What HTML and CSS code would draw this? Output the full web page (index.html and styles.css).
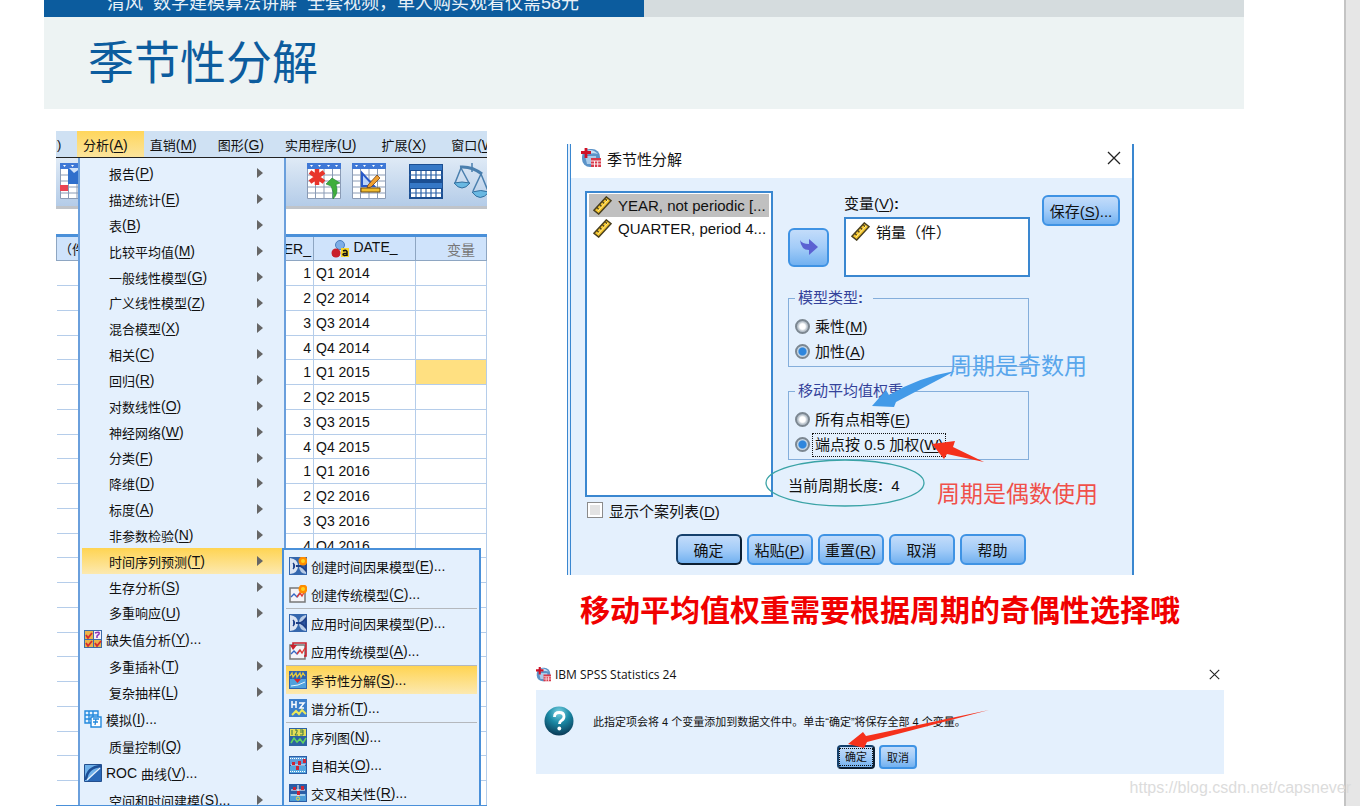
FILE: index.html
```html
<!DOCTYPE html>
<html lang="zh-CN">
<head>
<meta charset="utf-8">
<title>季节性分解</title>
<link rel="stylesheet" href="styles.css">
</head>
<body>
<svg class="defs" aria-hidden="true">
  <symbol id="ruler" viewBox="0 0 20 20">
    <path d="M1 15 14 1l5 4L6 19z" fill="#f5c52c" stroke="#4a4020" stroke-width="1.6"/>
    <path d="m4 12 2 2m1-5 2 2m1-5 2 2m1-5 2 2" stroke="#4a4020" stroke-width="1.3"/>
    <path d="m5 16 11-12" stroke="#fff0a0" stroke-width="1"/>
  </symbol>
  <symbol id="logo" viewBox="0 0 20 20">
    <rect x="1" y="1" width="18" height="18" rx="8" fill="#5b93c8"/>
    <path d="M4 4q6-5 13 2-5-2-13 1z" fill="#c6dff4"/>
    <path d="M4 8h11v8H6z" fill="#a9cbea"/>
    <path d="M5 0v10M0 4.500h10" stroke="#cf1126" stroke-width="2.800"/>
    <path d="M10 10h10v9H10z" fill="#d8394a"/>
    <path d="M10 13h10m-10 3h10m-6.500-3v6m3.200-6v6" stroke="#fff" stroke-width=".9"/>
  </symbol>
  <symbol id="grid" viewBox="0 0 34 36">
    <path d="M.5.500h33v35H.5z" fill="#fff" stroke="#8a9bb5"/>
    <path d="M0 0h34v6H0z" fill="#3f78d6"/>
    <path d="M3 2h3l-1.500 2zm8 0h3l-1.500 2zm9 0h3l-1.500 2zm8 0h3l-1.500 2z" fill="#fff"/>
    <path d="M0 12h34M0 18h34M0 24h34M0 30h34M8.500 6v30M17 6v30M25.500 6v30" stroke="#8a9bb5"/>
  </symbol>
  <symbol id="causal" viewBox="0 0 18 18">
    <path d="M0 0h18v18H0z" fill="#3567ad"/>
    <path d="M1 1q8 1 8 8t-8 8z" fill="#dbe4f3"/>
    <path d="M17 1q-7 1-7 8t7 8z" fill="#b8cbe6"/>
    <path d="M17 4q-3 4-6 5 3 1 6 5zM4 6q3 3 0 6" stroke="#1f3f86" stroke-width="1.400" fill="#2c55a0"/>
    <path d="M7 9h5" stroke="#1f3f86" stroke-width="2"/>
  </symbol>
  <symbol id="chart" viewBox="0 0 18 18">
    <path d="M1 3h15v14H1z" fill="#f4f4f8" stroke="#777" stroke-width="1.500"/>
    <path d="m2 12 3-3 3 3 3-4" stroke="#3466c4" stroke-width="1.400" fill="none"/>
    <path d="m8 12 3-4 2 3 3-5" stroke="#e23b35" stroke-width="1.400" fill="none"/>
  </symbol>
  <symbol id="star" viewBox="0 0 10 10">
    <circle cx="5" cy="5" r="4.500" fill="#ff8c00"/><circle cx="5" cy="5" r="2" fill="#ffd21f"/>
  </symbol>
</svg>
<div class="page">
  <main class="slide">
    <header class="head">
      <div class="strip"><p class="promo">清风&nbsp; 数学建模算法讲解&nbsp; 全套视频，单人购买观看仅需58元</p></div>
      <h1 class="title">季节性分解</h1>
    </header>

    <div class="content">
      <section class="spss">
        <nav class="menubar">
          <button class="edge">)</button>
          <button class="open">分析<span>(<u>A</u>)</span></button>
          <button>直销<span>(<u>M</u>)</span></button>
          <button>图形<span>(<u>G</u>)</span></button>
          <button class="roomy">实用程序<span>(<u>U</u>)</span></button>
          <button class="roomy">扩展<span>(<u>X</u>)</span></button>
          <button>窗口<span>(<u>W</u>)</span></button>
        </nav>
        <div class="toolbar">
          <svg class="tool" viewBox="0 0 34 36"><use href="#grid"/><path d="M8 6h26v15H8z" fill="#2f6fcc"/><path d="m9 5 5 5 7-5z" fill="#cfe2fa"/><path d="M0 22h8v6H0z" fill="#ea4453"/></svg>
          <div class="tools">
            <svg class="tool" viewBox="0 0 34 36"><use href="#grid"/><path d="M10 6v16M3 9l14 10M17 9 3 19" stroke="#e8352c" stroke-width="4.500"/><path d="m19 21 6-6 8 5-4 1.500q3 9-3 14.500 1-8-2-13z" fill="#3fae3c" stroke="#1e8230" stroke-width=".6"/></svg>
            <svg class="tool" viewBox="0 0 34 36"><use href="#grid"/><path d="M10 10v13h12z" fill="#bcd4fa" stroke="#2859c8" stroke-width="2"/><path d="m16 22 9-10 3 3-9 9-4 1z" fill="#f0a030" stroke="#74421a" stroke-width=".8"/><path d="M9 25h19v4H9z" fill="#f2bd2c" stroke="#6f4b10"/></svg>
            <svg class="tool" viewBox="0 0 34 36"><path d="M0 1h34v35H0z" fill="#1c4f92"/><path d="M1 2h32v5H1zM1 20h32v5H1z" fill="#3678c6"/><path d="M2 8h30v8H2zM2 26h30v8H2z" fill="#fff"/><path d="M0 12h34M0 30h34M7 8v8m5-8v8m5-8v8m5-8v8m5-8v8M7 26v8m5-8v8m5-8v8m5-8v8m5-8v8" stroke="#2b62a8" stroke-width="1.200"/></svg>
            <svg class="tool" viewBox="0 0 34 36"><path d="M18 0v9M7 5 1 20M7 5l8 15M27 11l-8 17m8-17 7 17" fill="none" stroke="#4a7fae" stroke-width="1.500"/><path d="M6 4q12-1 22 7" fill="none" stroke="#4a7fae" stroke-width="3"/><path d="M0 20q8-2 16 0-8 10-16 0zM18 29q9-3 17 0-9 11-17 0z" fill="#69b8e2" stroke="#34709f"/></svg>
          </div>
        </div>
        <table class="data">
          <colgroup><col class="c1"><col class="c2"><col class="c3"><col></colgroup>
          <thead><tr><th class="left">（件</th><th class="right">QUARTER_</th><th><svg class="nominal" viewBox="0 0 18 18"><circle cx="9" cy="5" r="4.500" fill="#7eaee6" stroke="#4b7fbc"/><circle cx="5" cy="13" r="4.500" fill="#c9202b"/><path d="M10 8h8v9h-8z" fill="#f6d52c"/><path d="M12 11q3-1.500 4 .5v4.500m0-2.500q-4-.5-4 1t4 .5" fill="none" stroke="#111" stroke-width="1.500"/></svg>DATE_</th><th class="new">变量</th></tr></thead>
          <tbody>
            <tr><td></td><td>1</td><td>Q1 2014</td><td></td></tr>
            <tr><td></td><td>2</td><td>Q2 2014</td><td></td></tr>
            <tr><td></td><td>3</td><td>Q3 2014</td><td></td></tr>
            <tr><td></td><td>4</td><td>Q4 2014</td><td></td></tr>
            <tr><td></td><td>1</td><td>Q1 2015</td><td class="current"></td></tr>
            <tr><td></td><td>2</td><td>Q2 2015</td><td></td></tr>
            <tr><td></td><td>3</td><td>Q3 2015</td><td></td></tr>
            <tr><td></td><td>4</td><td>Q4 2015</td><td></td></tr>
            <tr><td></td><td>1</td><td>Q1 2016</td><td></td></tr>
            <tr><td></td><td>2</td><td>Q2 2016</td><td></td></tr>
            <tr><td></td><td>3</td><td>Q3 2016</td><td></td></tr>
            <tr><td></td><td>4</td><td>Q4 2016</td><td></td></tr>
            <tr><td></td><td></td><td></td><td></td></tr>
            <tr><td></td><td></td><td></td><td></td></tr>
            <tr><td></td><td></td><td></td><td></td></tr>
            <tr><td></td><td></td><td></td><td></td></tr>
            <tr><td></td><td></td><td></td><td></td></tr>
            <tr><td></td><td></td><td></td><td></td></tr>
            <tr><td></td><td></td><td></td><td></td></tr>
            <tr><td></td><td></td><td></td><td></td></tr>
            <tr><td></td><td></td><td></td><td></td></tr>
            <tr><td></td><td></td><td></td><td></td></tr>
          </tbody>
        </table>

        <div class="menu">
          <button class="sub">报告<span>(<u>P</u>)</span></button>
          <button class="sub">描述统计<span>(<u>E</u>)</span></button>
          <button class="sub">表<span>(<u>B</u>)</span></button>
          <button class="sub">比较平均值<span>(<u>M</u>)</span></button>
          <button class="sub">一般线性模型<span>(<u>G</u>)</span></button>
          <button class="sub">广义线性模型<span>(<u>Z</u>)</span></button>
          <button class="sub">混合模型<span>(<u>X</u>)</span></button>
          <button class="sub">相关<span>(<u>C</u>)</span></button>
          <button class="sub">回归<span>(<u>R</u>)</span></button>
          <button class="sub">对数线性<span>(<u>O</u>)</span></button>
          <button class="sub">神经网络<span>(<u>W</u>)</span></button>
          <button class="sub">分类<span>(<u>F</u>)</span></button>
          <button class="sub">降维<span>(<u>D</u>)</span></button>
          <button class="sub">标度<span>(<u>A</u>)</span></button>
          <button class="sub">非参数检验<span>(<u>N</u>)</span></button>
          <button class="sub active">时间序列预测<span>(<u>T</u>)</span></button>
          <button class="sub">生存分析<span>(<u>S</u>)</span></button>
          <button class="sub">多重响应<span>(<u>U</u>)</span></button>
          <button class="iconic"><svg viewBox="0 0 18 18"><path d="M0 0h18v18H0z" fill="#3b6ca8"/><path d="M1 1h8v8H1zM1 10h8v7H1zm9 0h7v7h-7z" fill="#e9b44a"/><path d="M10 1h7v8h-7z" fill="#f7f0f8"/><path d="m2 5 2 3 4-5M2 13l2 3 4-5m3 2 2 3 4-5" fill="none" stroke="#d82c2c" stroke-width="1.800"/><path d="M11 3q5-2 4 1l-2 2v2" fill="none" stroke="#8b35b8" stroke-width="1.500"/></svg>缺失值分析<span>(<u>Y</u>)...</span></button>
          <button class="sub">多重插补<span>(<u>T</u>)</span></button>
          <button class="sub">复杂抽样<span>(<u>L</u>)</span></button>
          <button class="iconic"><svg viewBox="0 0 18 18"><path d="M1 1h13v12H1zM1 5h13M1 9h13M5 1v12M9 1v12" fill="#e8f4ff" stroke="#2389dd" stroke-width="1.400"/><path d="M7 7h10v10H7z" fill="#fff" stroke="#2389dd" stroke-width="1.400"/><path d="M9 9h6m-6 3h5m-2-3-1 6" stroke="#2389dd" stroke-width="1.300"/></svg>模拟<span>(<u>I</u>)...</span></button>
          <button class="sub">质量控制<span>(<u>Q</u>)</span></button>
          <button class="iconic"><svg viewBox="0 0 18 18"><path d="M.5.500h17v17H.5z" fill="#6fb1ea" stroke="#234f8e"/><path d="M17 1v16H3z" fill="#2a69b8"/><path d="M2 16Q3 3 17 2" fill="none" stroke="#1d4f97" stroke-width="2.500"/><path d="M3 16 16 4" fill="none" stroke="#e6f2fd" stroke-width="1.400"/></svg><span>ROC </span>曲线<span>(<u>V</u>)...</span></button>
          <button class="sub">空间和时间建模<span>(<u>S</u>)...</span></button>
        </div>

        <div class="submenu">
          <button><svg viewBox="0 0 18 18"><use href="#causal"/><use href="#star" x="9" y="-1" width="10" height="10"/></svg>创建时间因果模型<span>(<u>E</u>)...</span></button>
          <button><svg viewBox="0 0 18 18"><use href="#chart"/><use href="#star" x="9" y="-1" width="10" height="10"/></svg>创建传统模型<span>(<u>C</u>)...</span></button>
          <hr>
          <button><svg viewBox="0 0 18 18"><use href="#causal"/></svg>应用时间因果模型<span>(<u>P</u>)...</span></button>
          <button><svg viewBox="0 0 18 18"><use href="#chart"/><path d="M4 5V1h13v13h-2" fill="none" stroke="#c91f2b" stroke-width="1.600"/><path d="M1 3h7L4 8z" fill="#c91f2b"/></svg>应用传统模型<span>(<u>A</u>)...</span></button>
          <hr>
          <button class="active"><svg viewBox="0 0 18 18"><path d="M0 0h18v18H0z" fill="#2d62b0"/><path d="M1 8h16v9H1z" fill="#4fa1dc"/><path d="m1 5 2-3 1 4 3-4 1 4 3-4 1 4 2-4 2 3" fill="none" stroke="#e4c93c" stroke-width="1.300"/><path d="M5 8h7l-3.500 4z" fill="#d9262d"/><path d="m2 15 7-1 7-3" fill="none" stroke="#e6f5ff"/></svg>季节性分解<span>(<u>S</u>)...</span></button>
          <button><svg viewBox="0 0 18 18"><path d="M0 0h18v18H0z" fill="#3c7fcb"/><path d="M3 2v7m4-7v7M3 5.500h4M10 4h5l-4 5h4" fill="none" stroke="#fff" stroke-width="1.500"/><path d="m3 16 4-4 3 3 3-4 4 4" fill="none" stroke="#ece95a" stroke-width="2"/></svg>谱分析<span>(<u>T</u>)...</span></button>
          <hr>
          <button><svg viewBox="0 0 18 18"><path d="M0 0h18v18H0z" fill="#2c62a2"/><path d="M1 1h16v7H1z" fill="#e6dd55"/><path d="M3 2v5m3-5h2v2L6 7h3m2-5h3v5h-3m0-3h3" fill="none" stroke="#39764b"/><path d="m2 15 3-5 3 4 3-3 3 4 3-5" fill="none" stroke="#62d65f" stroke-width="1.500"/></svg>序列图<span>(<u>N</u>)...</span></button>
          <button><svg viewBox="0 0 18 18"><path d="M0 0h18v18H0z" fill="#2a5da6"/><path d="M1 1h16v8H1z" fill="#5f9fdb"/><path d="M1 10h16v7H1z" fill="#55a7df"/><path d="M1 2.500h16M1 15.500h16" stroke="#fff" stroke-dasharray="1 1"/><path d="M2 9h14" stroke="#fff"/><path d="M3 6h3v3H3zm6-1h3v4H9zM7 10h3v4H7zm7-7h3v4h-3z" fill="#cd2536"/></svg>自相关<span>(<u>O</u>)...</span></button>
          <button><svg viewBox="0 0 18 18"><path d="M0 0h18v18H0z" fill="#2a5da6"/><path d="M1 10h16v7H1z" fill="#4b9cd8"/><path d="M2 6h14M2 11h14M9 1v11" stroke="#fff"/><path d="M4 3h3v3H4zm8-1h3v4h-3zM8 7h3v4H8z" fill="#cd2536"/><circle cx="9" cy="14.500" r="1.600" fill="none" stroke="#f3dd3c"/></svg>交叉相关性<span>(<u>R</u>)...</span></button>
        </div>
      </section>

      <div class="right">
        <section class="dialog">
          <div class="dialog-title"><svg class="logo"><use href="#logo"/></svg><h2>季节性分解</h2>
            <button class="close" aria-label="关闭"><svg viewBox="0 0 14 14"><path d="m1 1 12 12M13 1 1 13" stroke="#222" stroke-width="1.300"/></svg></button></div>
          <div class="dialog-body">
            <ul class="list">
              <li class="picked"><svg class="ruler"><use href="#ruler"/></svg>YEAR, not periodic [...</li>
              <li><svg class="ruler"><use href="#ruler"/></svg>QUARTER, period 4...</li>
            </ul>
            <div class="middle">
              <p class="var-label" id="var-label">变量(<u>V</u>)<b>:</b></p>
              <div class="picker">
                <button class="move" aria-label="移动变量"><svg viewBox="0 0 18 16"><path d="M0 1q2 4 9 4V0l9 8-9 8v-5Q1 11 0 1z" fill="#5b61d2"/></svg></button>
                <ul class="vars" aria-labelledby="var-label"><li><svg class="ruler"><use href="#ruler"/></svg>销量（件）</li></ul>
              </div>
              <fieldset>
                <legend>模型类型<b>:</b></legend>
                <label><input type="radio" name="model"><span>乘性(<u>M</u>)</span></label>
                <label><input type="radio" name="model" checked><span>加性(<u>A</u>)</span></label>
              </fieldset>
              <fieldset>
                <legend>移动平均值权重</legend>
                <label><input type="radio" name="weight"><span>所有点相等(<u>E</u>)</span></label>
                <label><input type="radio" name="weight" checked><span class="focus">端点按 0.5 加权(<u>W</u>)</span></label>
              </fieldset>
              <p class="period">当前周期长度<b>:</b>&nbsp; 4</p>
            </div>
            <button class="btn save">保存(<u>S</u>)...</button>
          </div>
          <label class="caselist"><input type="checkbox"><span>显示个案列表(<u>D</u>)</span></label>
          <div class="actions">
            <button class="btn default">确定</button>
            <button class="btn">粘贴(<u>P</u>)</button>
            <button class="btn">重置(<u>R</u>)</button>
            <button class="btn">取消</button>
            <button class="btn">帮助</button>
          </div>
          <svg class="marks" viewBox="0 0 567 430">
            <ellipse cx="278" cy="339" rx="79" ry="23" fill="none" stroke="#3aa3a6" stroke-width="1.300"/>
            <path d="m305 262 14-16 3 5q30-18 66-24l-59 31-2 5z" fill="#429ae8"/>
            <path d="m365 300 23-3-2 6 31 15-37-8-3 5z" fill="#f5311c"/>
          </svg>
          <p class="note odd">周期是奇数用</p>
          <p class="note even">周期是偶数使用</p>
        </section>

        <p class="remark">移动平均值权重需要根据周期的奇偶性选择哦</p>

        <section class="message">
          <div class="message-title"><svg class="logo small"><use href="#logo"/></svg><h2>IBM SPSS Statistics 24</h2>
            <button class="close" aria-label="关闭"><svg viewBox="0 0 14 14"><path d="m1 1 12 12M13 1 1 13" stroke="#222" stroke-width="1.400"/></svg></button></div>
          <div class="message-body">
            <div class="message-text">
              <svg class="question" viewBox="0 0 30 30"><defs><radialGradient id="ball" cx=".5" cy=".2" r=".8"><stop offset="0" stop-color="#7fd4e4"/><stop offset=".45" stop-color="#1b8aa6"/><stop offset="1" stop-color="#0a3a56"/></radialGradient></defs><circle cx="15" cy="15" r="14.500" fill="url(#ball)"/><path d="M10.500 11q0-4.500 4.700-4.500 4.800 0 4.800 4 0 2.500-2.500 4-2 1.200-2 3.500" fill="none" stroke="#fff" stroke-width="2.800"/><circle cx="15.300" cy="22.500" r="1.900" fill="#fff"/></svg>
              <p>此指定项会将 4 个变量添加到数据文件中。单击“确定”将保存全部 4 个变量。</p>
            </div>
            <div class="message-actions"><button class="btn default"><span class="focus">确定</span></button><button class="btn">取消</button></div>
          </div>
          <svg class="marks" viewBox="0 0 688 114"><path d="m312 84 15-12 3 4 123-26-122 32-3 6z" fill="#f5311c"/></svg>
        </section>
      </div>
    </div>
  </main>
  <div class="gutter"></div>
  <p class="watermark">https://blog.csdn.net/capsnever</p>
</div>
</body>
</html>
```
FILE: styles.css
```css
* { box-sizing: border-box; }
body, h1, h2, p, ul { margin: 0; padding: 0; }
body {
  font: 15px "Liberation Sans", "Noto Sans CJK SC", sans-serif;
  color: #111;
  background: #fff;
}
ul { list-style: none; }
button {
  font: inherit;
  color: inherit;
  margin: 0;
  padding: 0;
  border: 0;
  background: none;
  white-space: nowrap;
}
u { text-underline-offset: 2px; }
.defs { display: none; }

.page { position: relative; display: flex; height: 100vh; overflow: hidden; }
.slide { flex: 1; min-width: 0; display: flex; flex-direction: column; }
.gutter { width: 16px; background: #e6e6e6; border-left: 2px solid #c4c4c4; }
.watermark {
  position: absolute;
  right: 9px;
  bottom: 8px;
  font-size: 16px;
  line-height: 20px;
  color: #dcdcdc;
}

.head { margin: 0 100px 0 44px; background: #edf3f3; }
.strip { height: 17px; background: #d5dcde; overflow: hidden; display: flex; align-items: flex-end; }
.promo {
  width: 50%;
  padding-left: 63px;
  background: #0c5c9e;
  color: #e8f1f8;
  font-size: 18px;
  line-height: 28px;
  white-space: nowrap;
}
.title {
  padding: 0 44px;
  height: 92px;
  font: 400 46px/84px "KaiTi", "STKaiti", "Noto Sans CJK SC", sans-serif;
  color: #0c5c9e;
}

.content { flex: 1; min-height: 0; display: flex; padding: 22px 120px 0 56px; }

/* data editor */
.spss {
  position: relative;
  width: 431px;
  overflow: hidden;
  font-size: 13px;
  border-bottom: 1px solid #4a90d9;
}
.spss button span { font-size: 14px; }
.menubar { display: flex; height: 27px; background: #cfe1f3; border-bottom: 1px solid #222; }
.menubar button { padding: 0 15px 0 6px; flex: none; }
.menubar .roomy { padding-right: 19px; }
.menubar .edge { width: 21px; padding: 0 0 0 1px; text-align: left; }
.menubar .open { background: linear-gradient(#ffd65c, #fbe49c); padding-right: 16px; }
.toolbar {
  display: flex;
  height: 51px;
  padding: 5px 4px;
  background: linear-gradient(#dfeaf6, #b4cce8);
  border-bottom: 3px solid #c0c4c9;
}
.tool { width: 34px; height: 36px; flex: none; }
.tools { display: flex; gap: 11px; margin-left: 213px; }
.tools .tool:nth-child(3) { margin-left: 12px; }

.data {
  width: 100%;
  table-layout: fixed;
  border-collapse: collapse;
  margin-top: 25px;
  border-top: 3px solid #4a90d9;
  font-size: 14px;
}
.data .c1 { width: 24px; }
.data .c2 { width: 233px; }
.data .c3 { width: 102px; }
.data th {
  height: 25px;
  padding: 0 2px;
  border: 1px solid #8ea6c2;
  background: #cfe3fb;
  font-weight: 400;
  white-space: nowrap;
}
.data .left { text-align: left; font-size: 13px; }
.data .right { text-align: right; }
.data .new { color: #777; padding-left: 22px; }
.nominal { width: 18px; height: 18px; margin-right: 4px; vertical-align: middle; }
.data td {
  height: 25px;
  padding: 0 2px;
  border: 1px solid #b5cdea;
  border-left: 0;
  line-height: 16px;
}
.data tr:nth-child(4n) td { height: 24px; }
.data td:nth-child(2) { text-align: right; }
.data .current { background: #ffe081; }

.menu {
  position: absolute;
  left: 22px;
  top: 27px;
  width: 208px;
  padding: 2px 2px;
  background: #e4f0fd;
  border: solid #6a9fdc;
  border-width: 0 2px;
}
.menu button, .submenu button {
  display: flex;
  align-items: center;
  width: 100%;
  height: 26px;
  white-space: pre;
}
.menu .sub { padding: 0 19px 0 27px; }
.menu button:nth-child(6n) { height: 25px; }
.menu .sub::after {
  content: "";
  margin-left: auto;
  border-left: 6px solid #666;
  border-top: 5px solid transparent;
  border-bottom: 5px solid transparent;
}
.menu .iconic, .menu .iconic:nth-child(6n) { height: 28px; padding-left: 2px; }
.menu svg, .submenu svg { width: 18px; height: 18px; margin-right: 4px; flex: none; }
.menu .active, .submenu .active { background: linear-gradient(#ffd452, #fce9b0); }

.submenu {
  position: absolute;
  left: 226px;
  top: 417px;
  width: 199px;
  padding: 2px 2px;
  background: #e4f0fd;
  border: 2px solid #4a90d9;
}
.submenu button { height: 28px; padding-left: 3px; }
.submenu hr { margin: 0; border: 0; border-top: 1px solid #b4b8bd; }

/* right column */
.right { flex: 1; min-width: 0; margin-left: 49px; padding-top: 13px; }
.dialog {
  position: relative;
  max-width: 567px;
  margin-left: 31px;
  background: #e4f0fd;
  border: solid #3a87d0;
  border-width: 0 2px;
  border-left: 4px double #3a87d0;
}
.dialog-title, .message-title { display: flex; align-items: center; background: #fff; }
.dialog-title { height: 34px; padding: 0 11px 6px 10px; }
.logo { width: 20px; height: 20px; margin-right: 6px; }
.dialog h2, .message h2 { font-size: 15px; font-weight: 400; }
.close { margin-left: auto; }
.close svg { display: block; width: 14px; height: 14px; }

.dialog-body { display: flex; padding: 13px 12px 0 14px; }
.list { width: 188px; border: 2px solid #3a87d0; background: #fff; padding: 1px 2px; font-size: 15px; }
.list li { display: flex; align-items: center; height: 23px; padding-left: 4px; white-space: nowrap; }
.list .picked { background: #c0c0c0; }
.ruler { width: 19px; height: 19px; margin-right: 6px; flex: none; }
.middle { flex: 1; min-width: 0; margin: 0 12px 0 15px; }
.var-label { padding-left: 56px; line-height: 26px; }
.picker { display: flex; align-items: center; gap: 15px; margin-bottom: 12px; }
.move, .btn {
  border: 2px solid #3f93e4;
  border-radius: 6px;
  background: linear-gradient(#c3dcfa, #a3ccf8 50%, #72b1f0);
}
.move { width: 41px; height: 39px; display: grid; place-items: center; }
.move svg { width: 18px; height: 16px; }
.vars { flex: 1; height: 60px; border: 2px solid #3a87d0; background: #fff; padding: 1px 5px; }
.vars li { display: flex; align-items: center; height: 22px; }
fieldset {
  margin: 0 1px 15px 0;
  padding: 7px 6px 2px;
  border: 1px solid #84aedb;
}
legend { padding: 0 10px 0 3px; line-height: 18px; color: #34429a; }
fieldset label { display: flex; align-items: center; height: 25px; gap: 2px; }
fieldset label span { padding: 0 2px; line-height: 22px; border: 1px dotted transparent; white-space: nowrap; }
fieldset label .focus { border-color: #111; }
input[type="radio"] {
  appearance: none;
  width: 15px;
  height: 15px;
  margin: 0;
  border: 2px solid #7c8791;
  border-radius: 50%;
  background: radial-gradient(#fff 35%, #b9c3cc 60%);
}
input[type="radio"]:checked { background: radial-gradient(#2e86dd 45%, #c8d8e6 60%); }
.period { line-height: 22px; }
.btn { height: 31px; }
.save { width: 78px; margin-top: 4px; }
.caselist { display: flex; align-items: center; gap: 6px; height: 26px; margin: 0 0 11px 16px; }
input[type="checkbox"] {
  appearance: none;
  width: 16px;
  height: 16px;
  margin: 0;
  border: 1px solid #8b8b8b;
  background: #e3e3e3;
  box-shadow: inset 0 0 0 2px #fff;
}
.actions { display: flex; justify-content: center; gap: 5px; padding: 0 2px 10px 0; }
.actions .btn { width: 66px; }
.btn.default { border-color: #15406c #0c1f33 #0c1f33 #15406c; }

.marks { position: absolute; left: 0; top: 0; width: 100%; pointer-events: none; }
.dialog .marks { left: -4px; width: 567px; }
.note { position: absolute; font-size: 23px; font-weight: 400; line-height: 28px; white-space: nowrap; }
.odd { left: 378px; top: 208px; color: #58a6ec; }
.even { left: 366px; top: 336px; color: #f0504a; }

.remark {
  margin-top: 17px;
  text-align: center;
  font-size: 30px;
  font-weight: 700;
  line-height: 38px;
  color: #f00000;
  white-space: nowrap;
}

.message { position: relative; margin-top: 30px; font-size: 11px; }
.message-title { height: 30px; padding: 0 4px 2px 0; }
.message h2 { font: 12px "Open Sans", sans-serif; }
.logo.small { width: 15px; height: 17px; margin-right: 4px; }
.message .close svg { width: 11px; height: 11px; }
.message-body { background: #e4f0fd; padding: 16px 8px 5px; }
.message-text { display: flex; align-items: center; gap: 19px; }
.question { width: 30px; height: 30px; }
.message-actions { display: flex; justify-content: center; gap: 4px; margin-top: 9px; margin-right: 6px; }
.message .btn { width: 38px; height: 24px; border-radius: 4px; }
.message .focus { display: block; border: 1px dotted #111; line-height: 16px; }
```
